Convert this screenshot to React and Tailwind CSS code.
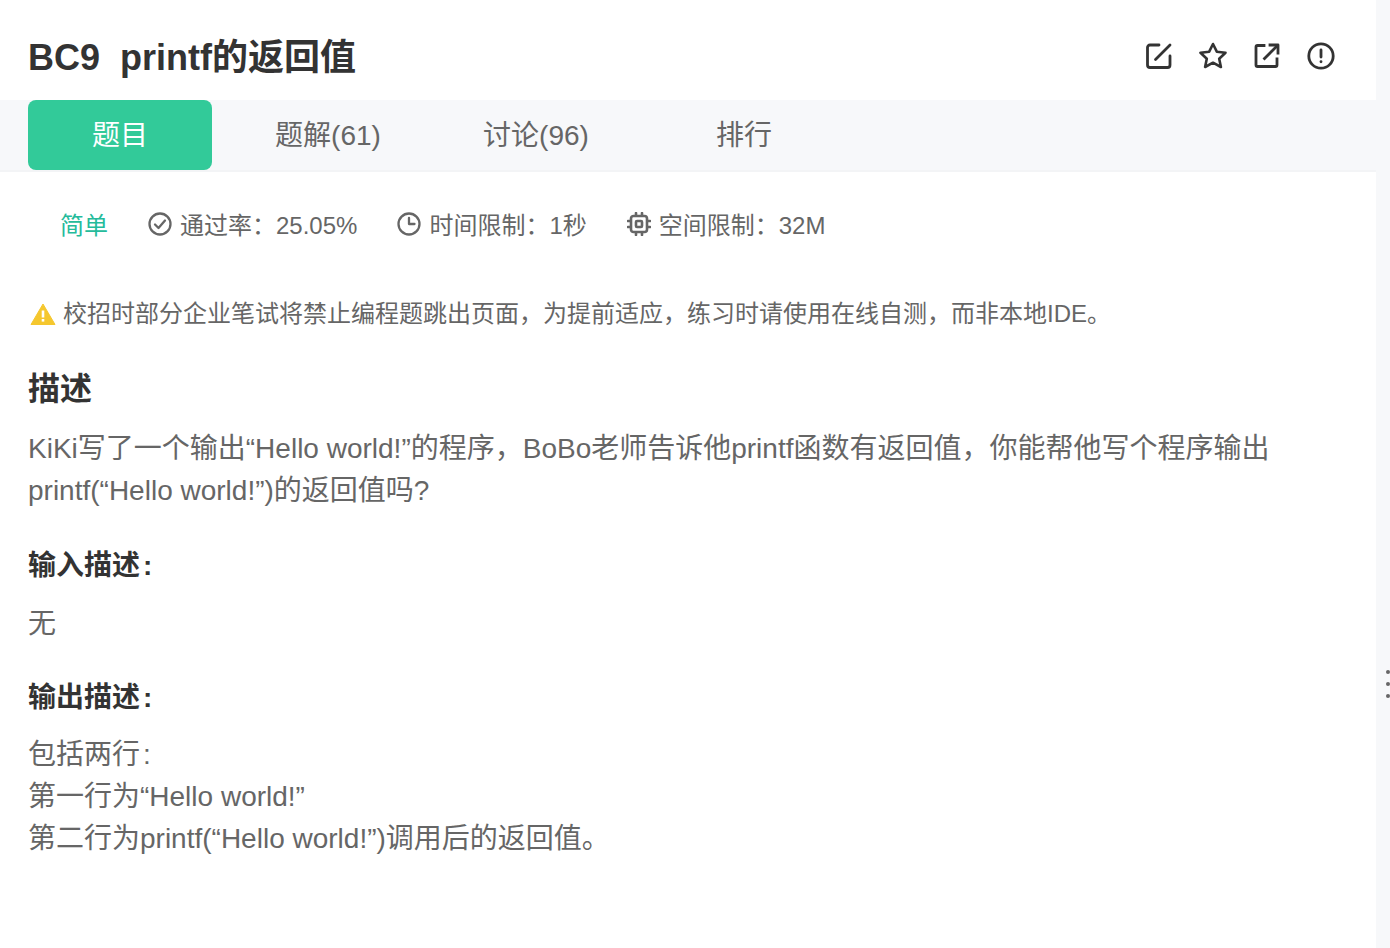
const font = { fontFamily: '"Liberation Sans", "Noto Sans CJK SC", sans-serif' }

function EditIcon() {
  return (
    <svg className="w-7 h-7" viewBox="0 0 28 28" fill="none" stroke="#333" strokeWidth="2.800" strokeLinecap="round" strokeLinejoin="round">
      <path d="M14 3H5a2.500 2.500 0 0 0-2.500 2.500v17.500a2.500 2.500 0 0 0 2.500 2.500h17.500a2.500 2.500 0 0 0 2.500-2.500V14" />
      <path d="M10.500 17.500L25 3" />
    </svg>
  )
}

function StarIcon() {
  return (
    <svg className="w-7 h-7" viewBox="0 0 28 28" fill="none" stroke="#333" strokeWidth="2.600" strokeLinejoin="round">
      <path d="M14 2l3.800 7.700 8.700 1-6.300 6 1.700 8.300-7.900-4.300-7.900 4.300 1.700-8.300-6.300-6 8.700-1z" />
    </svg>
  )
}

function ShareIcon() {
  return (
    <svg className="w-7 h-7" viewBox="0 0 28 28" fill="none" stroke="#333" strokeWidth="2.800" strokeLinecap="square" strokeLinejoin="round">
      <path d="M11 3.500H4.500a1.500 1.500 0 0 0-1.500 1.500v18a1.500 1.500 0 0 0 1.500 1.500h18a1.500 1.500 0 0 0 1.500-1.500V17" />
      <path d="M11.500 16.500L24 4" />
      <path d="M17 3h8v8" />
    </svg>
  )
}

function ReportIcon() {
  return (
    <svg className="w-7 h-7" viewBox="0 0 28 28" fill="none" stroke="#333" strokeWidth="2.800" strokeLinecap="round">
      <circle cx="14" cy="14" r="12.200" />
      <path d="M14 8v7" />
      <path d="M14 19.600v.2" />
    </svg>
  )
}

function CheckIcon() {
  return (
    <svg className="mb-1 w-6 h-6" viewBox="0 0 24 24" fill="none" stroke="#666" strokeWidth="2.300" strokeLinecap="round" strokeLinejoin="round">
      <circle cx="12" cy="12" r="10.500" />
      <path d="M7 12.500l3.500 3.500 6.500-7.500" />
    </svg>
  )
}

function ClockIcon() {
  return (
    <svg className="mb-1 w-6 h-6" viewBox="0 0 24 24" fill="none" stroke="#666" strokeWidth="2.300" strokeLinecap="round" strokeLinejoin="round">
      <circle cx="12" cy="12" r="10.500" />
      <path d="M12 6v6h5.500" />
    </svg>
  )
}

function ChipIcon() {
  return (
    <svg className="mb-1 w-6 h-6" viewBox="0 0 24 24" fill="none" stroke="#666" strokeWidth="2.600" strokeLinecap="round" strokeLinejoin="round">
      <rect x="4" y="4" width="16" height="16" rx="2.500" />
      <rect x="9" y="9" width="6" height="6" rx="1" />
      <path d="M9 1v2M15 1v2M9 21v2M15 21v2M1 9h2M1 15h2M21 9h2M21 15h2" />
    </svg>
  )
}

function WarnIcon() {
  return (
    <svg className="w-[26px] h-[26px]" viewBox="0 0 26 26">
      <path d="M13 3L25 23.500H1z" fill="#f5c72e" stroke="#f5c72e" strokeWidth="1" strokeLinejoin="round" />
      <path d="M13 9.500v7" stroke="#fff" strokeWidth="2.600" />
      <path d="M13 18v2.600" stroke="#fff" strokeWidth="2.600" />
    </svg>
  )
}

export default function App() {
  const tabs = ['题目', '题解(61)', '讨论(96)', '排行']

  return (
    <div className="flex h-[948px] w-[1390px] overflow-hidden bg-white" style={font}>
      <div className="w-[1376px]">
        {/* 标题 */}
        <div className="flex h-[100px] items-center justify-between pl-[28px] pr-[41px] pt-[16px]">
          <h1 className="text-[36px] font-bold leading-[44px] text-[#333] whitespace-pre">BC9  printf的返回值</h1>
          <div className="flex gap-[26px] -mt-[4px]">
            <EditIcon />
            <StarIcon />
            <ShareIcon />
            <ReportIcon />
          </div>
        </div>

        {/* tabs */}
        <div className="flex h-[72px] gap-6 border-b-2 border-[#f3f4f6] bg-[#f7f8fa] pl-[28px]">
          {tabs.map((tab, i) => (
            <div
              key={tab}
              className={
                i === 0
                  ? 'flex h-[70px] w-[184px] items-center justify-center rounded-lg bg-[#32ca99] pt-[1px] text-[28px] text-white'
                  : 'flex h-[70px] w-[184px] items-center justify-center pt-[1px] text-[28px] text-[#666]'
              }
            >
              {tab}
            </div>
          ))}
        </div>

        {/* 信息 */}
        <div className="flex h-[52px] mt-[28px] items-center pl-[60px] text-[24px] text-[#666]">
          <span className="mr-[40px] text-[#25bb9b]">简单</span>
          <span className="mr-[40px] flex items-center gap-[8px]"><CheckIcon />通过率：25.05%</span>
          <span className="mr-[40px] flex items-center gap-[8px]"><ClockIcon />时间限制：1秒</span>
          <span className="flex items-center gap-[8px]"><ChipIcon />空间限制：32M</span>
        </div>

        {/* 提示 */}
        <div className="mt-[44px] flex h-[36px] items-center gap-[7px] pl-[30px] text-[24px] text-[#666]">
          <WarnIcon />
          <span>校招时部分企业笔试将禁止编程题跳出页面，为提前适应，练习时请使用在线自测，而非本地IDE。</span>
        </div>

        {/* 题面 */}
        <div className="px-[28px] pt-[33px] text-[28px] leading-[42px] text-[#666]">
          <h2 className="text-[32px] font-bold leading-[48px] text-[#333]">描述</h2>
          <p className="mt-[15px]">KiKi写了一个输出“Hello world!”的程序，BoBo老师告诉他printf函数有返回值，你能帮他写个程序输出printf(“Hello world!”)的返回值吗?</p>
          <h3 className="mt-[33px] font-bold text-[#333]">输入描述<span className="ml-[3px]">:</span></h3>
          <p className="mt-[16px]">无</p>
          <h3 className="mt-[32px] font-bold text-[#333]">输出描述<span className="ml-[3px]">:</span></h3>
          <p className="mt-[15px]">包括两行<span className="ml-[3px]">:</span><br />第一行为“Hello world!”<br />第二行为printf(“Hello world!”)调用后的返回值。</p>
        </div>
      </div>

      {/* 拖拽条 */}
      <div className="flex w-[14px] flex-col items-end justify-center gap-[8px] bg-[#f7f8fa] pt-[420px]">
        <span className="h-1 w-1 rounded-full bg-[#666]" />
        <span className="h-1 w-1 rounded-full bg-[#666]" />
        <span className="h-1 w-1 rounded-full bg-[#666]" />
      </div>
    </div>
  )
}
